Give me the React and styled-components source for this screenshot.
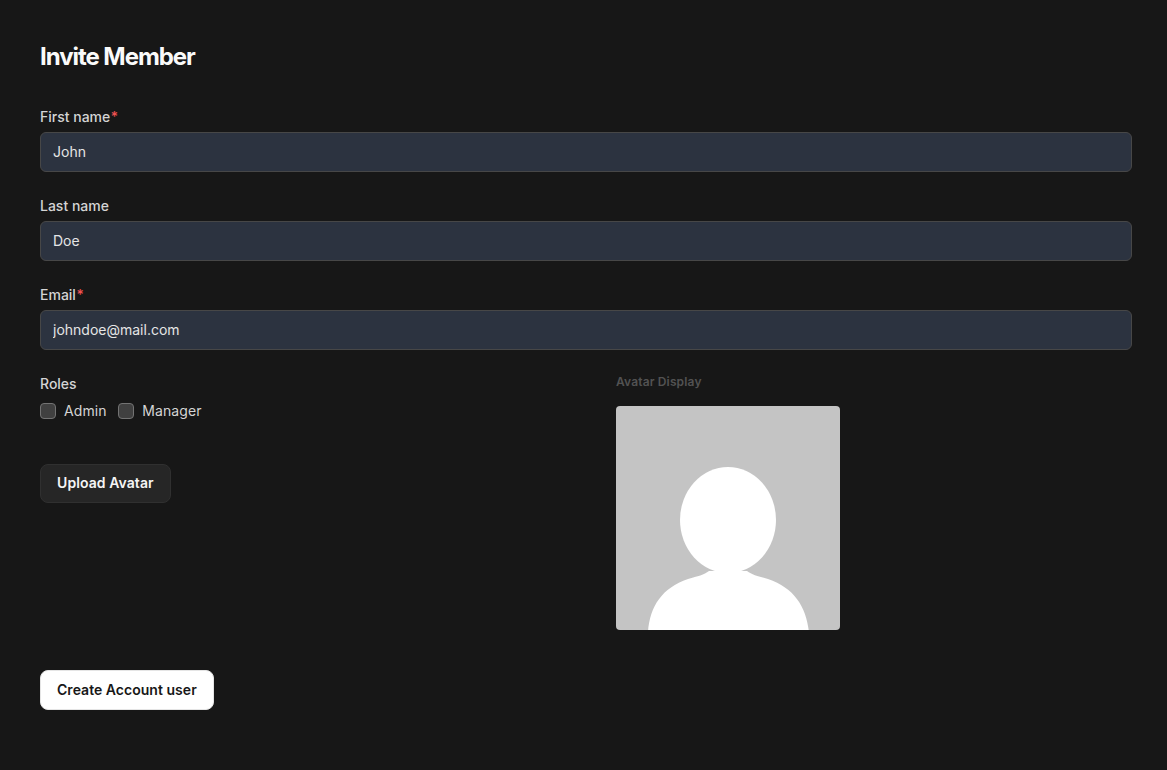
import styled, { createGlobalStyle } from "styled-components";

const GlobalStyle = createGlobalStyle`
  html, body {
    margin: 0;
    padding: 0;
    background: #171717;
  }

  * {
    box-sizing: border-box;
  }
`;

const Page = styled.form`
  width: 1167px;
  height: 770px;
  padding: 41px 35px 0 40px;
  background: #171717;
  font-family: Inter, "Liberation Sans", sans-serif;
  overflow: hidden;
`;

const Title = styled.h1`
  margin: 0 0 34px;
  height: 32px;
  font-size: 24px;
  line-height: 32px;
  font-weight: 700;
  letter-spacing: -1.05px;
  color: #fafafa;
`;

const Field = styled.div`
  display: flex;
  flex-direction: column;
  gap: 5px;
  margin-bottom: 24px;
`;

const Label = styled.label`
  font-size: 14px;
  line-height: 20px;
  font-weight: 500;
  color: #d4d4d4;
`;

const Required = styled.span`
  margin-left: 0.5px;
  color: #f05252;
`;

const Input = styled.input`
  width: 100%;
  height: 40px;
  padding: 0 12px 2px;
  background: #2c3340;
  border: 1px solid #474747;
  border-radius: 6px;
  color: #e5e5e5;
  font-family: inherit;
  font-size: 14px;
  outline: none;
`;

const Columns = styled.div`
  display: grid;
  grid-template-columns: 516px 516px;
  column-gap: 60px;
  margin-bottom: 40px;
`;

const Column = styled.div`
  display: flex;
  flex-direction: column;
  align-items: flex-start;
`;

const RoleRow = styled.div`
  display: flex;
  align-items: center;
  gap: 11.5px;
  height: 20px;
  margin-top: 7px;
  margin-bottom: 43px;
`;

const Role = styled.label`
  display: flex;
  align-items: center;
  gap: 8px;
  font-size: 14px;
  line-height: 20px;
  font-weight: 400;
  letter-spacing: 0.1px;
  color: #d4d4d4;
`;

const Checkbox = styled.input.attrs({ type: "checkbox" })`
  appearance: none;
  width: 16px;
  height: 16px;
  margin: 0;
  background: #404040;
  border: 1px solid #737373;
  border-radius: 4px;
`;

const Button = styled.button`
  height: ${({ $primary }) => ($primary ? "40px" : "39px")};
  padding: 0 16px 2px;
  background: ${({ $primary }) => ($primary ? "#ffffff" : "#262626")};
  border: 1px solid ${({ $primary }) => ($primary ? "#e5e5e5" : "#303030")};
  border-radius: 8px;
  color: ${({ $primary }) => ($primary ? "#171717" : "#f5f5f5")};
  font-family: inherit;
  font-size: 14px;
  font-weight: 600;
  letter-spacing: ${({ $primary }) => ($primary ? "0.03px" : "0.08px")};
`;

const AvatarLabel = styled.span`
  height: 16px;
  margin-bottom: 16px;
  font-size: 12px;
  line-height: 16px;
  font-weight: 600;
  letter-spacing: 0.15px;
  color: #525252;
`;

const AvatarFrame = styled.svg`
  display: block;
  width: 224px;
  height: 224px;
  border-radius: 4px;
`;

function AvatarPlaceholder() {
  return (
    <AvatarFrame viewBox="0 0 224 224">
      <defs>
        <filter id="soft">
          <feGaussianBlur stdDeviation="0.5" />
        </filter>
      </defs>
      <rect width="224" height="224" fill="#c4c4c4" />
      <g fill="#ffffff" filter="url(#soft)">
        <ellipse cx="112" cy="114" rx="48" ry="53" />
        <path d="M32 226C34 200 46 182 72 173C82 170 88 169 93 165L131 165C136 169 142 170 152 173C178 182 190 200 193 226Z" />
      </g>
    </AvatarFrame>
  );
}

export default function App() {
  return (
    <>
      <GlobalStyle />
      <Page onSubmit={(e) => e.preventDefault()}>
        <Title>Invite Member</Title>

        <Field>
          <Label htmlFor="first-name">
            First name<Required>*</Required>
          </Label>
          <Input id="first-name" defaultValue="John" />
        </Field>

        <Field>
          <Label htmlFor="last-name">Last name</Label>
          <Input id="last-name" defaultValue="Doe" />
        </Field>

        <Field>
          <Label htmlFor="email">
            Email<Required>*</Required>
          </Label>
          <Input id="email" defaultValue="johndoe@mail.com" />
        </Field>

        <Columns>
          <Column>
            <Label as="span">Roles</Label>
            <RoleRow>
              <Role>
                <Checkbox />
                Admin
              </Role>
              <Role>
                <Checkbox />
                Manager
              </Role>
            </RoleRow>
            <Button type="button">Upload Avatar</Button>
          </Column>
          <Column>
            <AvatarLabel>Avatar Display</AvatarLabel>
            <AvatarPlaceholder />
          </Column>
        </Columns>

        <Button $primary type="submit">
          Create Account user
        </Button>
      </Page>
    </>
  );
}
